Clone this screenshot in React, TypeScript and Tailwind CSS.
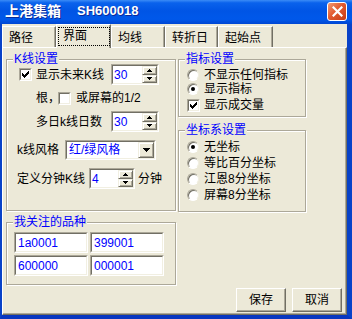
import React from "react";

type P = { className?: string; children?: React.ReactNode };

function Sunken({ className = "", children }: P) {
  return (
    <div className={`bg-white border border-t-[#aca899] border-l-[#aca899] border-b-white border-r-white ${className}`}>
      <div className="w-full h-full border border-t-[#716f64] border-l-[#716f64] border-b-[#f1efe2] border-r-[#f1efe2] flex items-center overflow-hidden">
        {children}
      </div>
    </div>
  );
}

function Raised({ className = "", children }: P) {
  return (
    <div className={`bg-[#ece9d8] border border-t-[#f1efe2] border-l-[#f1efe2] border-b-[#716f64] border-r-[#716f64] shadow-[inset_1px_1px_0_#fff,inset_-1px_-1px_0_#aca899] flex items-center justify-center ${className}`}>
      {children}
    </div>
  );
}

function UpTri() {
  return (
    <svg width="5" height="3" viewBox="0 0 5 3" shapeRendering="crispEdges">
      <path d="M2 0h1v1h1v1h1v1h-5v-1h1v-1h1z" fill="#000" />
    </svg>
  );
}
function DownTri() {
  return (
    <svg width="5" height="3" viewBox="0 0 5 3" shapeRendering="crispEdges">
      <path d="M0 0h5v1h-1v1h-1v1h-1v-1h-1v-1h-1z" fill="#000" />
    </svg>
  );
}
function DownTri7() {
  return (
    <svg width="7" height="4" viewBox="0 0 7 4" shapeRendering="crispEdges">
      <path d="M0 0h7v1h-1v1h-1v1h-1v1h-1v-1h-1v-1h-1v-1h-1z" fill="#000" />
    </svg>
  );
}

function Spin({ className = "", value }: { className?: string; value: string }) {
  return (
    <Sunken className={className}>
      <span className="flex-1 pl-[1px] text-[#0000ff] leading-[14px]">{value}</span>
      <div className="w-[15px] h-full flex flex-col">
        <Raised className="flex-1">
          <UpTri />
        </Raised>
        <Raised className="flex-1">
          <DownTri />
        </Raised>
      </div>
    </Sunken>
  );
}

function Check({ checked }: { checked?: boolean }) {
  return (
    <Sunken className="w-[13px] h-[13px] shrink-0">
      {checked && (
        <svg width="9" height="9" viewBox="0 0 9 9" shapeRendering="crispEdges">
          <g fill="#000">
            <rect x="7" y="1" width="1" height="1" />
            <rect x="6" y="2" width="2" height="1" />
            <rect x="1" y="3" width="1" height="1" />
            <rect x="5" y="3" width="3" height="1" />
            <rect x="1" y="4" width="2" height="1" />
            <rect x="4" y="4" width="3" height="1" />
            <rect x="1" y="5" width="5" height="1" />
            <rect x="2" y="6" width="3" height="1" />
            <rect x="3" y="7" width="1" height="1" />
          </g>
        </svg>
      )}
    </Sunken>
  );
}

function Radio({ checked }: { checked?: boolean }) {
  return (
    <div className="w-[12px] h-[12px] shrink-0 rounded-full bg-white border border-t-[#aca899] border-l-[#aca899] border-b-white border-r-[#f1efe2] shadow-[inset_1px_1px_0_#716f64] flex items-center justify-center">
      {checked && <div className="w-[4px] h-[4px] rounded-full bg-black" />}
    </div>
  );
}

function Group({ label, className = "", children }: P & { label: string }) {
  return (
    <div className={`flex flex-col border border-[#aca899] shadow-[inset_1px_1px_0_#fff,1px_1px_0_#fff] ${className}`}>
      <div className="self-start ml-[6px] -mt-[8px] -mb-[6px] h-[14px] leading-[14px] px-[1px] bg-[#ece9d8] text-[#0000ff] relative">
        {label}
      </div>
      {children}
    </div>
  );
}

function Tab({ label, className = "" }: { label: string; className?: string }) {
  return (
    <div
      className={`h-[21px] pl-[6px] pt-[1px] flex items-center border-t border-l border-t-white border-l-white border-r border-r-[#716f64] shadow-[inset_-1px_0_0_#aca899] ${className}`}
    >
      {label}
    </div>
  );
}

function Button({ label }: { label: string }) {
  return (
    <div className="w-[50px] h-[24px] flex items-center justify-center bg-[#ece9d8] border border-t-white border-l-white border-b-[#716f64] border-r-[#716f64] shadow-[inset_-1px_-1px_0_#aca899]">
      {label}
    </div>
  );
}

export default function App() {
  return (
    <div className="w-[352px] h-[319px] flex flex-col bg-[#ece9d8] overflow-hidden font-['Liberation_Sans','Noto_Sans_CJK_SC',sans-serif] text-[12px] leading-[14px] text-black">
      {/* Title bar */}
      <div className="h-[24px] shrink-0 flex items-start pl-[5px] pr-[5px] bg-[linear-gradient(180deg,#3b8cf6_0%,#0a62ec_12%,#0055e5_45%,#0058ea_80%,#0046d2_100%)]">
        <span className="mt-[3px] text-[14px] leading-[16px] font-bold text-white [text-shadow:1px_1px_0_#0a2a9a]">上港集箱</span>
        <span className="mt-[3px] ml-[16px] text-[13px] leading-[16px] font-bold text-white [text-shadow:1px_1px_0_#0a2a9a]">SH600018</span>
        <div className="ml-auto mt-[2px] w-[20px] h-[19px] rounded-[3px] border border-white bg-[linear-gradient(135deg,#f29a74_0%,#e25b30_45%,#c53c14_100%)] flex items-center justify-center">
          <svg width="11" height="11" viewBox="0 0 11 11">
            <path d="M1.5 1.5 L9.5 9.5 M9.5 1.5 L1.5 9.5" stroke="#fff" strokeWidth="2.2" strokeLinecap="square" />
          </svg>
        </div>
      </div>

      {/* Body */}
      <div className="flex-1 min-h-0 flex flex-col border-l-2 border-r-[5px] border-b-4 border-l-[#0842c8] border-r-[#0842c8] border-b-[#0836c0]">
        {/* Tabs */}
        <div className="h-[23px] shrink-0 flex items-end">
          <Tab label="路径" className="w-[54px]" />
          <div className="w-[55px] h-[24px] -mb-[1px] relative z-10 bg-[#ece9d8] border-t border-l border-t-white border-l-white border-r border-r-[#716f64] shadow-[inset_-1px_0_0_#aca899] pl-[1px] pt-[2px]">
            <div className="w-[52px] h-[19px] border border-dotted border-black pl-[4px] pb-[2px] flex items-center">界面</div>
          </div>
          <Tab label="均线" className="w-[54px]" />
          <Tab label="转折日" className="w-[53px]" />
          <Tab label="起始点" className="w-[55px]" />
        </div>

        {/* Panel */}
        <div className="flex-1 min-h-0 flex flex-col border-t border-l border-t-white border-l-white border-r border-b border-r-[#716f64] border-b-[#716f64] shadow-[inset_-1px_-1px_0_#aca899]">
          <div className="flex pl-[3px] pt-[11px]">
            {/* Left column */}
            <div className="w-[170px] flex flex-col">
              <Group label="K线设置" className="h-[152px]">
                <div className="mt-[4px] h-[21px] flex items-center pl-[12px] pr-[16px]">
                  <Check checked />
                  <span className="ml-[4px]">显示未来K线</span>
                  <Spin className="ml-auto w-[48px] h-[21px]" value="30" />
                </div>
                <div className="mt-[3px] h-[20px] flex items-center pl-[29px]">
                  <span className="w-[22px]">根，</span>
                  <Check />
                  <span className="ml-[5px]">或屏幕的1/2</span>
                </div>
                <div className="mt-[3px] h-[21px] flex items-center pl-[29px] pr-[16px]">
                  <span>多日k线日数</span>
                  <Spin className="ml-auto w-[48px] h-[21px]" value="30" />
                </div>
                <div className="mt-[8px] h-[20px] flex items-center pl-[10px]">
                  <span>k线风格</span>
                  <Sunken className="ml-[6px] w-[91px] h-[20px]">
                    <span className="flex-1 pl-[2px] text-[#0000ff]">红/绿风格</span>
                    <Raised className="w-[16px] h-full">
                      <DownTri7 />
                    </Raised>
                  </Sunken>
                </div>
                <div className="mt-[8px] h-[21px] flex items-center pl-[10px]">
                  <span>定义分钟K线</span>
                  <Spin className="ml-[4px] w-[46px] h-[21px]" value="4" />
                  <span className="ml-[3px]">分钟</span>
                </div>
              </Group>

              <Group label="我关注的品种" className="mt-[11px] h-[63px]">
                <div className="mt-[9px] flex gap-[2px] pl-[7px]">
                  <Sunken className="w-[74px] h-[21px]">
                    <span className="pl-[2px] text-[#0000ff]">1a0001</span>
                  </Sunken>
                  <Sunken className="w-[74px] h-[21px]">
                    <span className="pl-[2px] text-[#0000ff]">399001</span>
                  </Sunken>
                </div>
                <div className="mt-[2px] flex gap-[2px] pl-[7px]">
                  <Sunken className="w-[74px] h-[21px]">
                    <span className="pl-[2px] text-[#0000ff]">600000</span>
                  </Sunken>
                  <Sunken className="w-[74px] h-[21px]">
                    <span className="pl-[2px] text-[#0000ff]">000001</span>
                  </Sunken>
                </div>
              </Group>
            </div>

            {/* Right column */}
            <div className="ml-[2px] w-[128px] flex flex-col">
              <Group label="指标设置" className="h-[58px]">
                <div className="mt-[8px] h-[14px] flex items-center pl-[8px] gap-[5px]">
                  <Radio />
                  <span>不显示任何指标</span>
                </div>
                <div className="h-[14px] flex items-center pl-[8px] gap-[5px]">
                  <Radio checked />
                  <span>显示指标</span>
                </div>
                <div className="mt-[2px] h-[14px] flex items-center pl-[8px] gap-[4px]">
                  <Check checked />
                  <span>显示成交量</span>
                </div>
              </Group>

              <Group label="坐标系设置" className="mt-[13px] h-[82px]">
                <div className="mt-[8px] h-[16px] flex items-center pl-[8px] gap-[5px]">
                  <Radio checked />
                  <span>无坐标</span>
                </div>
                <div className="h-[16px] flex items-center pl-[8px] gap-[5px]">
                  <Radio />
                  <span>等比百分坐标</span>
                </div>
                <div className="h-[16px] flex items-center pl-[8px] gap-[5px]">
                  <Radio />
                  <span>江恩8分坐标</span>
                </div>
                <div className="h-[16px] flex items-center pl-[8px] gap-[5px]">
                  <Radio />
                  <span>屏幕8分坐标</span>
                </div>
              </Group>
            </div>
          </div>

          {/* Buttons */}
          <div className="mt-[3px] flex justify-end gap-[6px] pr-[4px]">
            <Button label="保存" />
            <Button label="取消" />
          </div>
        </div>
      </div>
    </div>
  );
}
